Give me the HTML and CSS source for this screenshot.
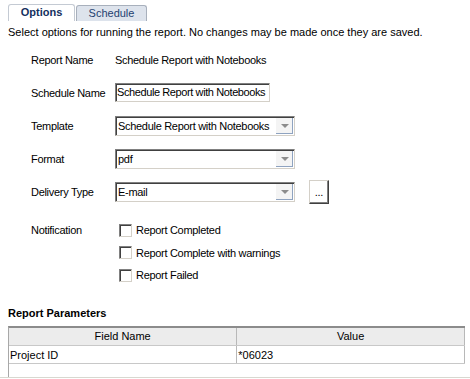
FILE: index.html
```html
<!DOCTYPE html>
<html lang="en">
<head>
    <meta charset="UTF-8">
    <title>Schedule Report</title>
    <link rel="stylesheet" href="styles.css">
</head>
<body>
  <!-- Tabs -->
  <div class="tab-bar">
    <div class="tab tab-active">Options</div>
    <div class="tab">Schedule</div>
  </div>

  <p class="intro">Select options for running the report. No changes may be made once they are saved.</p>

  <!-- Options form -->
  <div class="form-grid">
    <div class="form-label">Report Name</div>
    <div class="form-value">Schedule Report with Notebooks</div>

    <div class="form-label">Schedule Name</div>
    <div class="form-value"><div class="text-input">Schedule Report with Notebooks</div></div>

    <div class="form-label">Template</div>
    <div class="form-value">
      <div class="select-box"><span class="select-text">Schedule Report with Notebooks</span><span class="select-arrow"></span></div>
    </div>

    <div class="form-label">Format</div>
    <div class="form-value">
      <div class="select-box"><span class="select-text">pdf</span><span class="select-arrow"></span></div>
    </div>

    <div class="form-label">Delivery Type</div>
    <div class="form-value">
      <div class="select-box"><span class="select-text">E-mail</span><span class="select-arrow"></span></div>
      <div class="more-btn">...</div>
    </div>

    <div class="form-label check-label">Notification</div>
    <div class="check-list">
      <div class="check-row"><span class="checkbox"></span>Report Completed</div>
      <div class="check-row"><span class="checkbox"></span>Report Complete with warnings</div>
      <div class="check-row"><span class="checkbox"></span>Report Failed</div>
    </div>
  </div>

  <!-- Parameters -->
  <h3 class="params-title">Report Parameters</h3>
  <div class="params-wrap">
    <table class="params-table">
      <thead>
        <tr><th>Field Name</th><th>Value</th></tr>
      </thead>
      <tbody>
        <tr><td>Project ID</td><td>*06023</td></tr>
      </tbody>
    </table>
  </div>
  <div class="page-rule"></div>
</body>
</html>
```

FILE: styles.css
```css
* {
  box-sizing: border-box;
  margin: 0;
  padding: 0;
}

body {
  font-family: "Liberation Sans", Arial, sans-serif;
  font-size: 11px;
  line-height: 14px;
  color: #000;
  background-color: #fff;
  overflow: hidden;
}

/* Tabs */

.tab-bar {
  display: flex;
  align-items: flex-end;
  height: 19px;
  padding-left: 8px;
  margin-top: 2px;
}

.tab {
  width: 71px;
  height: 16px;
  line-height: 15px;
  text-align: center;
  font-size: 11px;
  background-color: #dde3ec;
  border: 1px solid #a8b0bc;
  border-bottom: none;
  border-radius: 3px 3px 0 0;
  color: #1f3f6f;
}

.tab-active {
  width: 67px;
  height: 17px;
  background-color: #fff;
  font-weight: bold;
  color: #14305e;
  border-color: #c4cad3;
  margin-right: 1px;
}

.intro {
  margin: 4px 0 0 8px;
  white-space: nowrap;
}

/* Form */

.form-grid {
  display: grid;
  grid-template-columns: 84px 1fr;
  grid-template-rows: repeat(5, 33px) auto;
  margin: 4px 0 0 31px;
  letter-spacing: -0.3px;
  white-space: nowrap;
}

.form-label,
.form-value {
  display: flex;
  align-items: center;
}

.check-label {
  align-items: flex-start;
  padding-top: 15px;
}

.text-input {
  width: 155px;
  height: 19px;
  line-height: 15px;
  padding-left: 1px;
  border: 1px solid;
  border-color: #808080 #d4d0c8 #d4d0c8 #808080;
  box-shadow: inset 1px 1px 0 #404040;
  padding-top: 1px;
  overflow: hidden;
  letter-spacing: -0.4px;
}

.select-box {
  display: flex;
  align-items: center;
  width: 180px;
  height: 20px;
  border: 1px solid;
  border-color: #808080 #d4d0c8 #d4d0c8 #808080;
  box-shadow: inset 1px 1px 0 #404040;
  padding: 2px 1px 1px 2px;
}

.select-text {
  flex: 1;
  white-space: nowrap;
  overflow: hidden;
}

.select-arrow {
  position: relative;
  width: 17px;
  height: 16px;
  background-color: #f4f4f4;
  border-right: 1px solid #8fa3c0;
  border-bottom: 1px solid #8fa3c0;
}

.select-arrow::after {
  content: "";
  position: absolute;
  left: 5px;
  top: 6px;
  border-left: 4px solid transparent;
  border-right: 4px solid transparent;
  border-top: 4px solid #8c8c8c;
}

.more-btn {
  width: 20px;
  height: 24px;
  margin-left: 14px;
  text-align: center;
  line-height: 22px;
  border: 1px solid;
  border-color: #d4d0c8 #404040 #404040 #d4d0c8;
  box-shadow: inset -1px -1px 0 #808080;
  background-color: #fff;
}

.check-list {
  padding-top: 11px;
}

.check-row {
  display: flex;
  align-items: center;
  height: 22.5px;
  padding-left: 4px;
}

.checkbox {
  width: 13px;
  height: 13px;
  margin-right: 4px;
  border: 1px solid;
  border-color: #808080 #d4d0c8 #d4d0c8 #808080;
  box-shadow: inset 1px 1px 0 #404040;
  background-color: #fff;
}

/* Parameters */

.params-title {
  font-size: 11px;
  font-weight: bold;
  margin: 19px 0 0 8px;
  line-height: 14px;
}

.params-wrap {
  margin: 6px 5px 0 8px;
  height: 51px;
  border-top: 2px solid #8c8c8c;
  border-left: 1px solid #a8a8a8;
}

.params-table {
  width: 100%;
  border-collapse: collapse;
  font-size: 11px;
}

.params-table th {
  font-weight: normal;
  background-color: #ececec;
  height: 18px;
  border-right: 1px solid #b8b8b8;
  border-bottom: 1px solid #c8c8c8;
  width: 50%;
}

.params-table td {
  height: 18px;
  padding-left: 1px;
  border-right: 1px solid #b8b8b8;
  border-bottom: 1px solid #c8c8c8;
}

.page-rule {
  height: 2px;
  border-top: 1px solid #d8d8d0;
}
```
